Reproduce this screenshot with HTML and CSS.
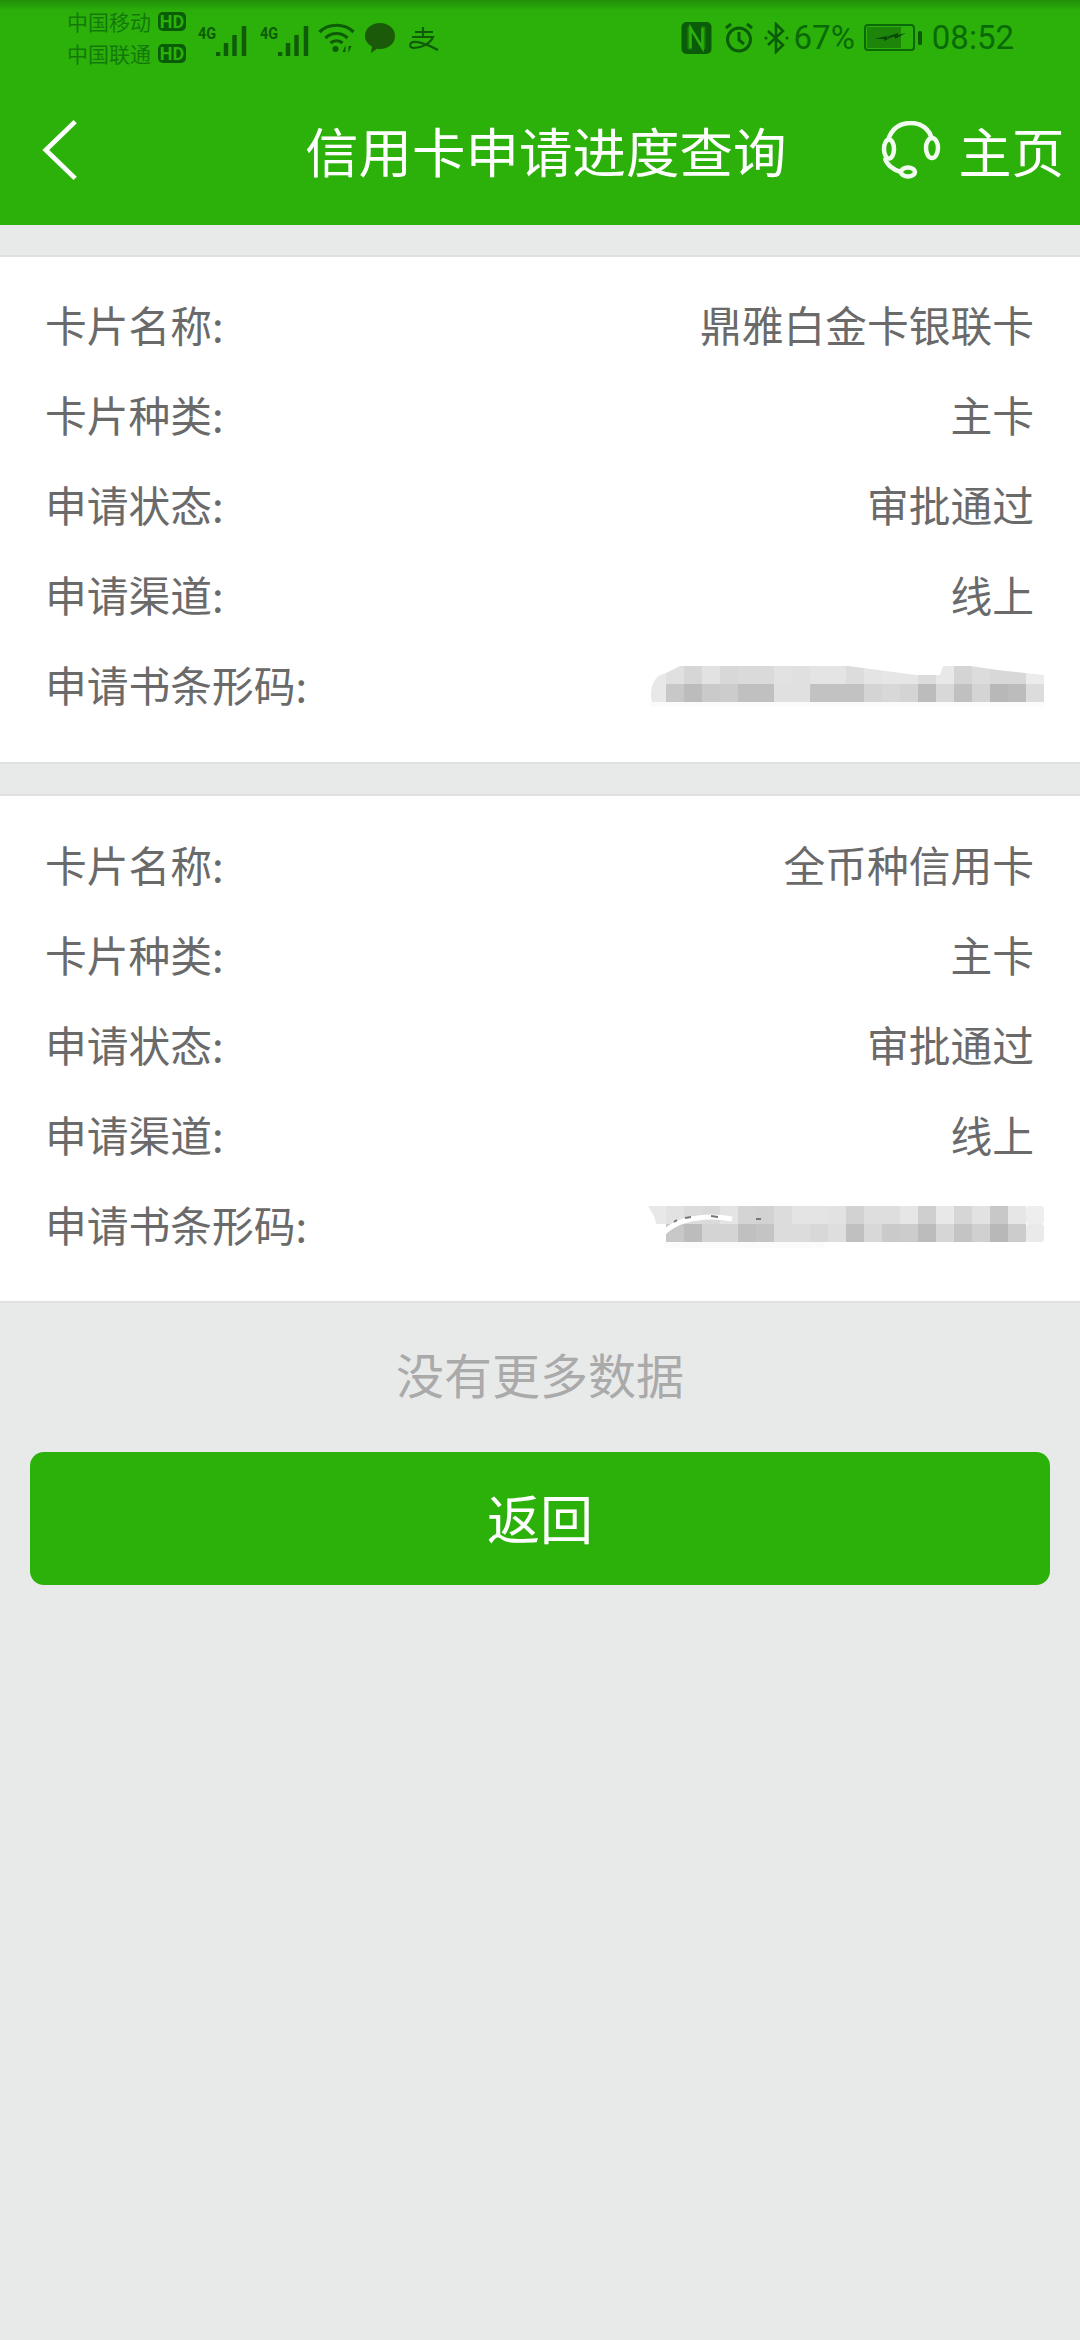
FILE: index.html
```html
<!DOCTYPE html>
<html lang="zh-CN">
<head>
<meta charset="utf-8">
<title>信用卡申请进度查询</title>
<link rel="stylesheet" href="styles.css">
</head>
<body>
<header class="header">
  <div class="status">
    <div class="carriers">
      <div class="carrier"><span>中国移动</span><b class="hd">HD</b></div>
      <div class="carrier"><span>中国联通</span><b class="hd">HD</b></div>
    </div>
    <div class="net"><span class="four-g">4G</span>
      <svg class="bars" viewBox="0 0 32 30"><path d="M2 26v4M10 17v13M18.500 9v21M28 0v30" fill="none" stroke="#0f5c08" stroke-width="4.500"/></svg>
    </div>
    <div class="net"><span class="four-g">4G</span>
      <svg class="bars" viewBox="0 0 32 30"><path d="M2 26v4M10 17v13M18.500 9v21M28 0v30" fill="none" stroke="#0f5c08" stroke-width="4.500"/></svg>
    </div>
    <svg class="wifi" viewBox="0 0 36 30" fill="none" stroke="#0f5c08" stroke-width="3.200"><path d="M1 9C10 0 26 0 35 9M7 15c6-6 16-6 22 0M12 20c3-3 9-3 12 0"/><circle cx="17" cy="26" r="3" fill="#0f5c08" stroke="none"/><path d="M27 22l-3 7h3zM30 30l3-7h-3z" fill="#0f5c08" stroke="none"/></svg>
    <svg class="bubble" viewBox="0 0 30 30"><path d="M15 0c8.500 0 15 5.500 15 13s-6.500 13-15 13c-1 0-2 0-3-.2L6 30l1-6.500C2.500 21 0 17.500 0 13 0 5.500 6.500 0 15 0z" fill="#1a5a08"/></svg>
    <svg class="alipay" viewBox="0 0 31 24" fill="none" stroke="#0f5c08" stroke-width="2.200"><path d="M7 5h18M15 0v9M4 10h21c-3 7-12 11-19 11-4 0-5-3-3-5 4-3 16 1 27 7"/></svg>
    <div class="status-right">
      <svg class="nfc" viewBox="0 0 30 32"><rect width="30" height="32" rx="5" fill="#0a5c08"/><path d="M6 5l4-1v24l-4-1zM24 5l-4-1v24l4-1z" fill="#2cb10a" opacity=".5"/><path d="M9 26V6l12 20V6" fill="none" stroke="#2cb10a" stroke-width="2.500"/></svg>
      <svg class="alarm" viewBox="0 0 30 31" fill="none" stroke="#0a5c08" stroke-width="3"><circle cx="15" cy="17.500" r="11.500"/><path d="M15 10v8l5 4M2 6l5-4M28 6l-5-4"/></svg>
      <svg class="bt" viewBox="0 0 25 32" fill="none" stroke="#0a5c08" stroke-width="2.500"><path d="M4 9l15 14-7 7V2l7 7L4 23"/><circle cx="23" cy="16" r="1.500" fill="#0a5c08" stroke="none"/><circle cx="2" cy="16" r="1.500" fill="#0a5c08" stroke="none"/></svg>
      <span class="pct">67%</span>
      <svg class="battery" viewBox="0 0 58 27"><rect x="1" y="1" width="49" height="25" rx="3" fill="none" stroke="#0a6a08" stroke-width="2"/><rect x="3" y="3" width="34" height="21" fill="#1d8509"/><path d="M10 15l13-3v2l9-3-12 6v-2zM22 13l12-4v2l8-2-11 6v-2z" fill="#0a4a06"/><rect x="54" y="7" width="4" height="14" rx="1.500" fill="#0a5c08"/></svg>
      <span class="clock">08:52</span>
    </div>
  </div>
  <nav class="nav">
    <svg class="back" viewBox="0 0 38 64" fill="none" stroke="#fff" stroke-width="5"><path d="M35 2L4 32l31 30"/></svg>
    <h1 class="title">信用卡申请进度查询</h1>
    <svg class="headset" viewBox="0 0 60 58" fill="none" stroke="#f2fbef" stroke-width="4.500"><path d="M7 19C11 7 20 2 30 2s19 6 21 17"/><ellipse cx="8" cy="28" rx="5" ry="9.500"/><ellipse cx="51" cy="27" rx="6" ry="10"/><path d="M4 37c1 6 8 12 16 14"/><ellipse cx="27" cy="51" rx="7" ry="4.500"/></svg>
    <span class="home">主页</span>
  </nav>
</header>

<main>
  <section class="card first">
    <div class="row"><span>卡片名称:</span><span>鼎雅白金卡银联卡</span></div>
    <div class="row"><span>卡片种类:</span><span>主卡</span></div>
    <div class="row"><span>申请状态:</span><span>审批通过</span></div>
    <div class="row"><span>申请渠道:</span><span>线上</span></div>
    <div class="row"><span>申请书条形码:</span>
      <svg class="mosaic" viewBox="0 0 400 48">
        <rect x="2" y="42" width="394" height="5" fill="#fbfbfb"/>
        <path d="M4 42C1 30 4 17 18 12V42z" fill="#e8e8e8"/>
        <g>
          <rect x="18" y="6" width="18" height="18" fill="#e0e0e0"/><rect x="36" y="6" width="18" height="18" fill="#d6d6d6"/><rect x="54" y="6" width="18" height="18" fill="#e2e2e2"/><rect x="72" y="6" width="18" height="18" fill="#d8d8d8"/><rect x="90" y="6" width="18" height="18" fill="#dadada"/><rect x="108" y="6" width="18" height="18" fill="#dadada"/><rect x="126" y="6" width="18" height="18" fill="#e2e2e2"/><rect x="144" y="6" width="18" height="18" fill="#e0e0e0"/><rect x="162" y="6" width="18" height="18" fill="#e4e4e4"/><rect x="180" y="6" width="18" height="18" fill="#e4e4e4"/><rect x="198" y="6" width="18" height="18" fill="#dcdcdc"/><rect x="216" y="6" width="18" height="18" fill="#e4e4e4"/><rect x="234" y="6" width="18" height="18" fill="#e6e6e6"/><rect x="252" y="6" width="18" height="18" fill="#e6e6e6"/><rect x="270" y="6" width="18" height="18" fill="#dcdcdc"/><rect x="288" y="6" width="18" height="18" fill="#e8e8e8"/><rect x="306" y="6" width="18" height="18" fill="#d4d4d4"/><rect x="324" y="6" width="18" height="18" fill="#dcdcdc"/><rect x="342" y="6" width="18" height="18" fill="#d8d8d8"/><rect x="360" y="6" width="18" height="18" fill="#d8d8d8"/><rect x="378" y="6" width="18" height="18" fill="#ececec"/>
          <rect x="18" y="24" width="18" height="18" fill="#c8c8c8"/><rect x="36" y="24" width="18" height="18" fill="#bcbcbc"/><rect x="54" y="24" width="18" height="18" fill="#cacaca"/><rect x="72" y="24" width="18" height="18" fill="#cccccc"/><rect x="90" y="24" width="18" height="18" fill="#c0c0c0"/><rect x="108" y="24" width="18" height="18" fill="#c0c0c0"/><rect x="126" y="24" width="18" height="18" fill="#e0e0e0"/><rect x="144" y="24" width="18" height="18" fill="#e0e0e0"/><rect x="162" y="24" width="18" height="18" fill="#c2c2c2"/><rect x="180" y="24" width="18" height="18" fill="#c2c2c2"/><rect x="198" y="24" width="18" height="18" fill="#c2c2c2"/><rect x="216" y="24" width="18" height="18" fill="#d4d4d4"/><rect x="234" y="24" width="18" height="18" fill="#d8d8d8"/><rect x="252" y="24" width="18" height="18" fill="#d4d4d4"/><rect x="270" y="24" width="18" height="18" fill="#bcbcbc"/><rect x="288" y="24" width="18" height="18" fill="#d8d8d8"/><rect x="306" y="24" width="18" height="18" fill="#c0c0c0"/><rect x="324" y="24" width="18" height="18" fill="#d4d4d4"/><rect x="342" y="24" width="18" height="18" fill="#b8b8b8"/><rect x="360" y="24" width="18" height="18" fill="#bcbcbc"/><rect x="378" y="24" width="18" height="18" fill="#dcdcdc"/>
        </g>
        <path d="M0 4H36L18 13 4 18V4zM200 4V6l68 9h24l3-9h27l28 4 46 5V4z" fill="#fff"/>
      </svg>
    </div>
  </section>
  <section class="card second">
    <div class="row"><span>卡片名称:</span><span>全币种信用卡</span></div>
    <div class="row"><span>卡片种类:</span><span>主卡</span></div>
    <div class="row"><span>申请状态:</span><span>审批通过</span></div>
    <div class="row"><span>申请渠道:</span><span>线上</span></div>
    <div class="row"><span>申请书条形码:</span>
      <svg class="mosaic" viewBox="0 0 400 48">
        <rect x="16" y="42" width="160" height="6" fill="#fbfbfb"/>
        <rect x="0" y="6" width="18" height="18" fill="#e8e8e8"/>
        <g>
          <rect x="18" y="6" width="18" height="18" fill="#e2e2e2"/><rect x="36" y="6" width="18" height="18" fill="#dcdcdc"/><rect x="54" y="6" width="18" height="18" fill="#dadada"/><rect x="72" y="6" width="18" height="18" fill="#e4e4e4"/><rect x="90" y="6" width="18" height="18" fill="#d4d4d4"/><rect x="108" y="6" width="18" height="18" fill="#d2d2d2"/><rect x="126" y="6" width="18" height="18" fill="#dcdcdc"/><rect x="144" y="6" width="18" height="18" fill="#e4e4e4"/><rect x="162" y="6" width="18" height="18" fill="#e4e4e4"/><rect x="180" y="6" width="18" height="18" fill="#e2e2e2"/><rect x="198" y="6" width="18" height="18" fill="#d2d2d2"/><rect x="216" y="6" width="18" height="18" fill="#dedede"/><rect x="234" y="6" width="18" height="18" fill="#dedede"/><rect x="252" y="6" width="18" height="18" fill="#e6e6e6"/><rect x="270" y="6" width="18" height="18" fill="#cfcfcf"/><rect x="288" y="6" width="18" height="18" fill="#e8e8e8"/><rect x="306" y="6" width="18" height="18" fill="#d6d6d6"/><rect x="324" y="6" width="18" height="18" fill="#e2e2e2"/><rect x="342" y="6" width="18" height="18" fill="#c8c8c8"/><rect x="360" y="6" width="18" height="18" fill="#e6e6e6"/><rect x="378" y="6" width="18" height="18" rx="3" fill="#eeeeee"/>
          <rect x="18" y="24" width="18" height="18" fill="#c8c8c8"/><rect x="36" y="24" width="18" height="18" fill="#bcbcbc"/><rect x="54" y="24" width="18" height="18" fill="#d4d4d4"/><rect x="72" y="24" width="18" height="18" fill="#d4d4d4"/><rect x="90" y="24" width="18" height="18" fill="#c0c0c0"/><rect x="108" y="24" width="18" height="18" fill="#c4c4c4"/><rect x="126" y="24" width="18" height="18" fill="#dcdcdc"/><rect x="144" y="24" width="18" height="18" fill="#dcdcdc"/><rect x="162" y="24" width="18" height="18" fill="#d8d8d8"/><rect x="180" y="24" width="18" height="18" fill="#dedede"/><rect x="198" y="24" width="18" height="18" fill="#c0c0c0"/><rect x="216" y="24" width="18" height="18" fill="#d8d8d8"/><rect x="234" y="24" width="18" height="18" fill="#cacaca"/><rect x="252" y="24" width="18" height="18" fill="#cccccc"/><rect x="270" y="24" width="18" height="18" fill="#bcbcbc"/><rect x="288" y="24" width="18" height="18" fill="#d6d6d6"/><rect x="306" y="24" width="18" height="18" fill="#c4c4c4"/><rect x="324" y="24" width="18" height="18" fill="#d0d0d0"/><rect x="342" y="24" width="18" height="18" fill="#b8b8b8"/><rect x="360" y="24" width="18" height="18" fill="#cccccc"/><rect x="378" y="24" width="18" height="18" rx="3" fill="#eaeaea"/>
        </g>
        <path d="M0 4V6L6 16 10 30 18 24V42H8L0 30z" fill="#fff"/>
        <path d="M10 42C14 30 30 20 50 18c14-2 24-1 34 1" fill="none" stroke="#fff" stroke-width="5"/>
        <path d="M26 22l3-2M37 18l6-1M63 16l7 1M108 19h5" fill="none" stroke="#777" stroke-width="2"/>
      </svg>
    </div>
  </section>
  <p class="no-more">没有更多数据</p>
  <button class="return" type="button">返回</button>
</main>
</body>
</html>
```

FILE: styles.css
```css
* { box-sizing: border-box; }
html, body { margin: 0; padding: 0; }
body {
  width: 1080px;
  min-height: 2340px;
  background: #e8eaea;
  font-family: "Noto Sans CJK SC", "Noto Sans", sans-serif;
  color: #666;
}
.header {
  height: 225px;
  background: linear-gradient(to bottom, #1f8f08 0, #2bad0a 10px, #2cb10a 20px);
}
.status {
  height: 75px;
  display: flex;
  align-items: center;
  padding: 0 66px 0 67px;
  color: #0a5c08;
}
.carriers {
  display: flex;
  flex-direction: column;
  gap: 11px;
  width: 131px;
  flex: none;
}
.carrier {
  display: flex;
  align-items: center;
  gap: 7px;
  font-size: 21px;
  line-height: 21px;
  color: #137a0a;
}
.hd {
  width: 28px;
  height: 19px;
  border-radius: 5px;
  background: #0a5c08;
  color: #2cb10a;
  font: bold 18px/19px "Roboto", sans-serif;
  text-align: center;
}
.net {
  display: flex;
  width: 62px;
  height: 32px;
  margin-top: 6px;
  flex: none;
}
.four-g {
  width: 18px;
  font: bold 17px/16px "Roboto", sans-serif;
  color: #0f5c08;
  transform: scaleX(.85);
  transform-origin: left top;
  white-space: nowrap;
}
.bars { width: 32px; height: 30px; margin-top: 1px; }
.wifi { width: 37px; height: 30px; margin: 0 9px 0 -4px; flex: none; }
.bubble { width: 32px; height: 30px; margin: 1px 12px 0 0; flex: none; }
.alipay { width: 31px; height: 24px; margin-top: 2px; flex: none; }
.status-right {
  display: flex;
  align-items: center;
  margin-left: auto;
}
.nfc { width: 31px; height: 32px; margin-right: 12px; }
.alarm { width: 30px; height: 31px; margin-right: 10px; }
.bt { width: 25px; height: 32px; margin-right: 5px; }
.pct, .clock {
  font: 33px/36px "Roboto", sans-serif;
  color: #0a6a08;
}
.battery { width: 58px; height: 27px; margin: 0 10px 0 9px; }
.nav {
  height: 150px;
  display: flex;
  align-items: center;
  padding: 0 0 0 42px;
}
.back { width: 36px; height: 62px; flex: none; }
.title {
  margin: 0 0 0 227px;
  font-size: 53.5px;
  font-weight: 400;
  line-height: 66px;
  color: #fff;
  white-space: nowrap;
}
.headset { width: 60px; height: 58px; margin-left: 94px; flex: none; }
.home {
  margin-left: 18px;
  font-size: 53px;
  line-height: 66px;
  color: #fff;
  white-space: nowrap;
}
.card {
  background: #fff;
  border-top: 2px solid #dfe1e1;
  border-bottom: 2px solid #dfe1e1;
  padding: 22px 46px 33px 45px;
}
.first { margin-top: 30px; }
.second { margin-top: 30px; padding-top: 23px; padding-bottom: 32px; }
.row {
  height: 90px;
  display: flex;
  justify-content: space-between;
  align-items: center;
  font-size: 41.75px;
  line-height: 60px;
  color: #6a6a6a;
}
.mosaic { width: 400px; height: 48px; margin-right: -14px; flex: none; }
.no-more {
  margin: 40px 0 0;
  font-size: 48px;
  line-height: 60px;
  text-align: center;
  color: #aaa;
}
.return {
  display: block;
  width: 1020px;
  height: 133px;
  margin: 49px 0 0 30px;
  padding: 0 0 3px;
  border: 0;
  border-radius: 14px;
  background: #2cb10a;
  color: #fff;
  font-family: inherit;
  font-size: 53px;
}
```
